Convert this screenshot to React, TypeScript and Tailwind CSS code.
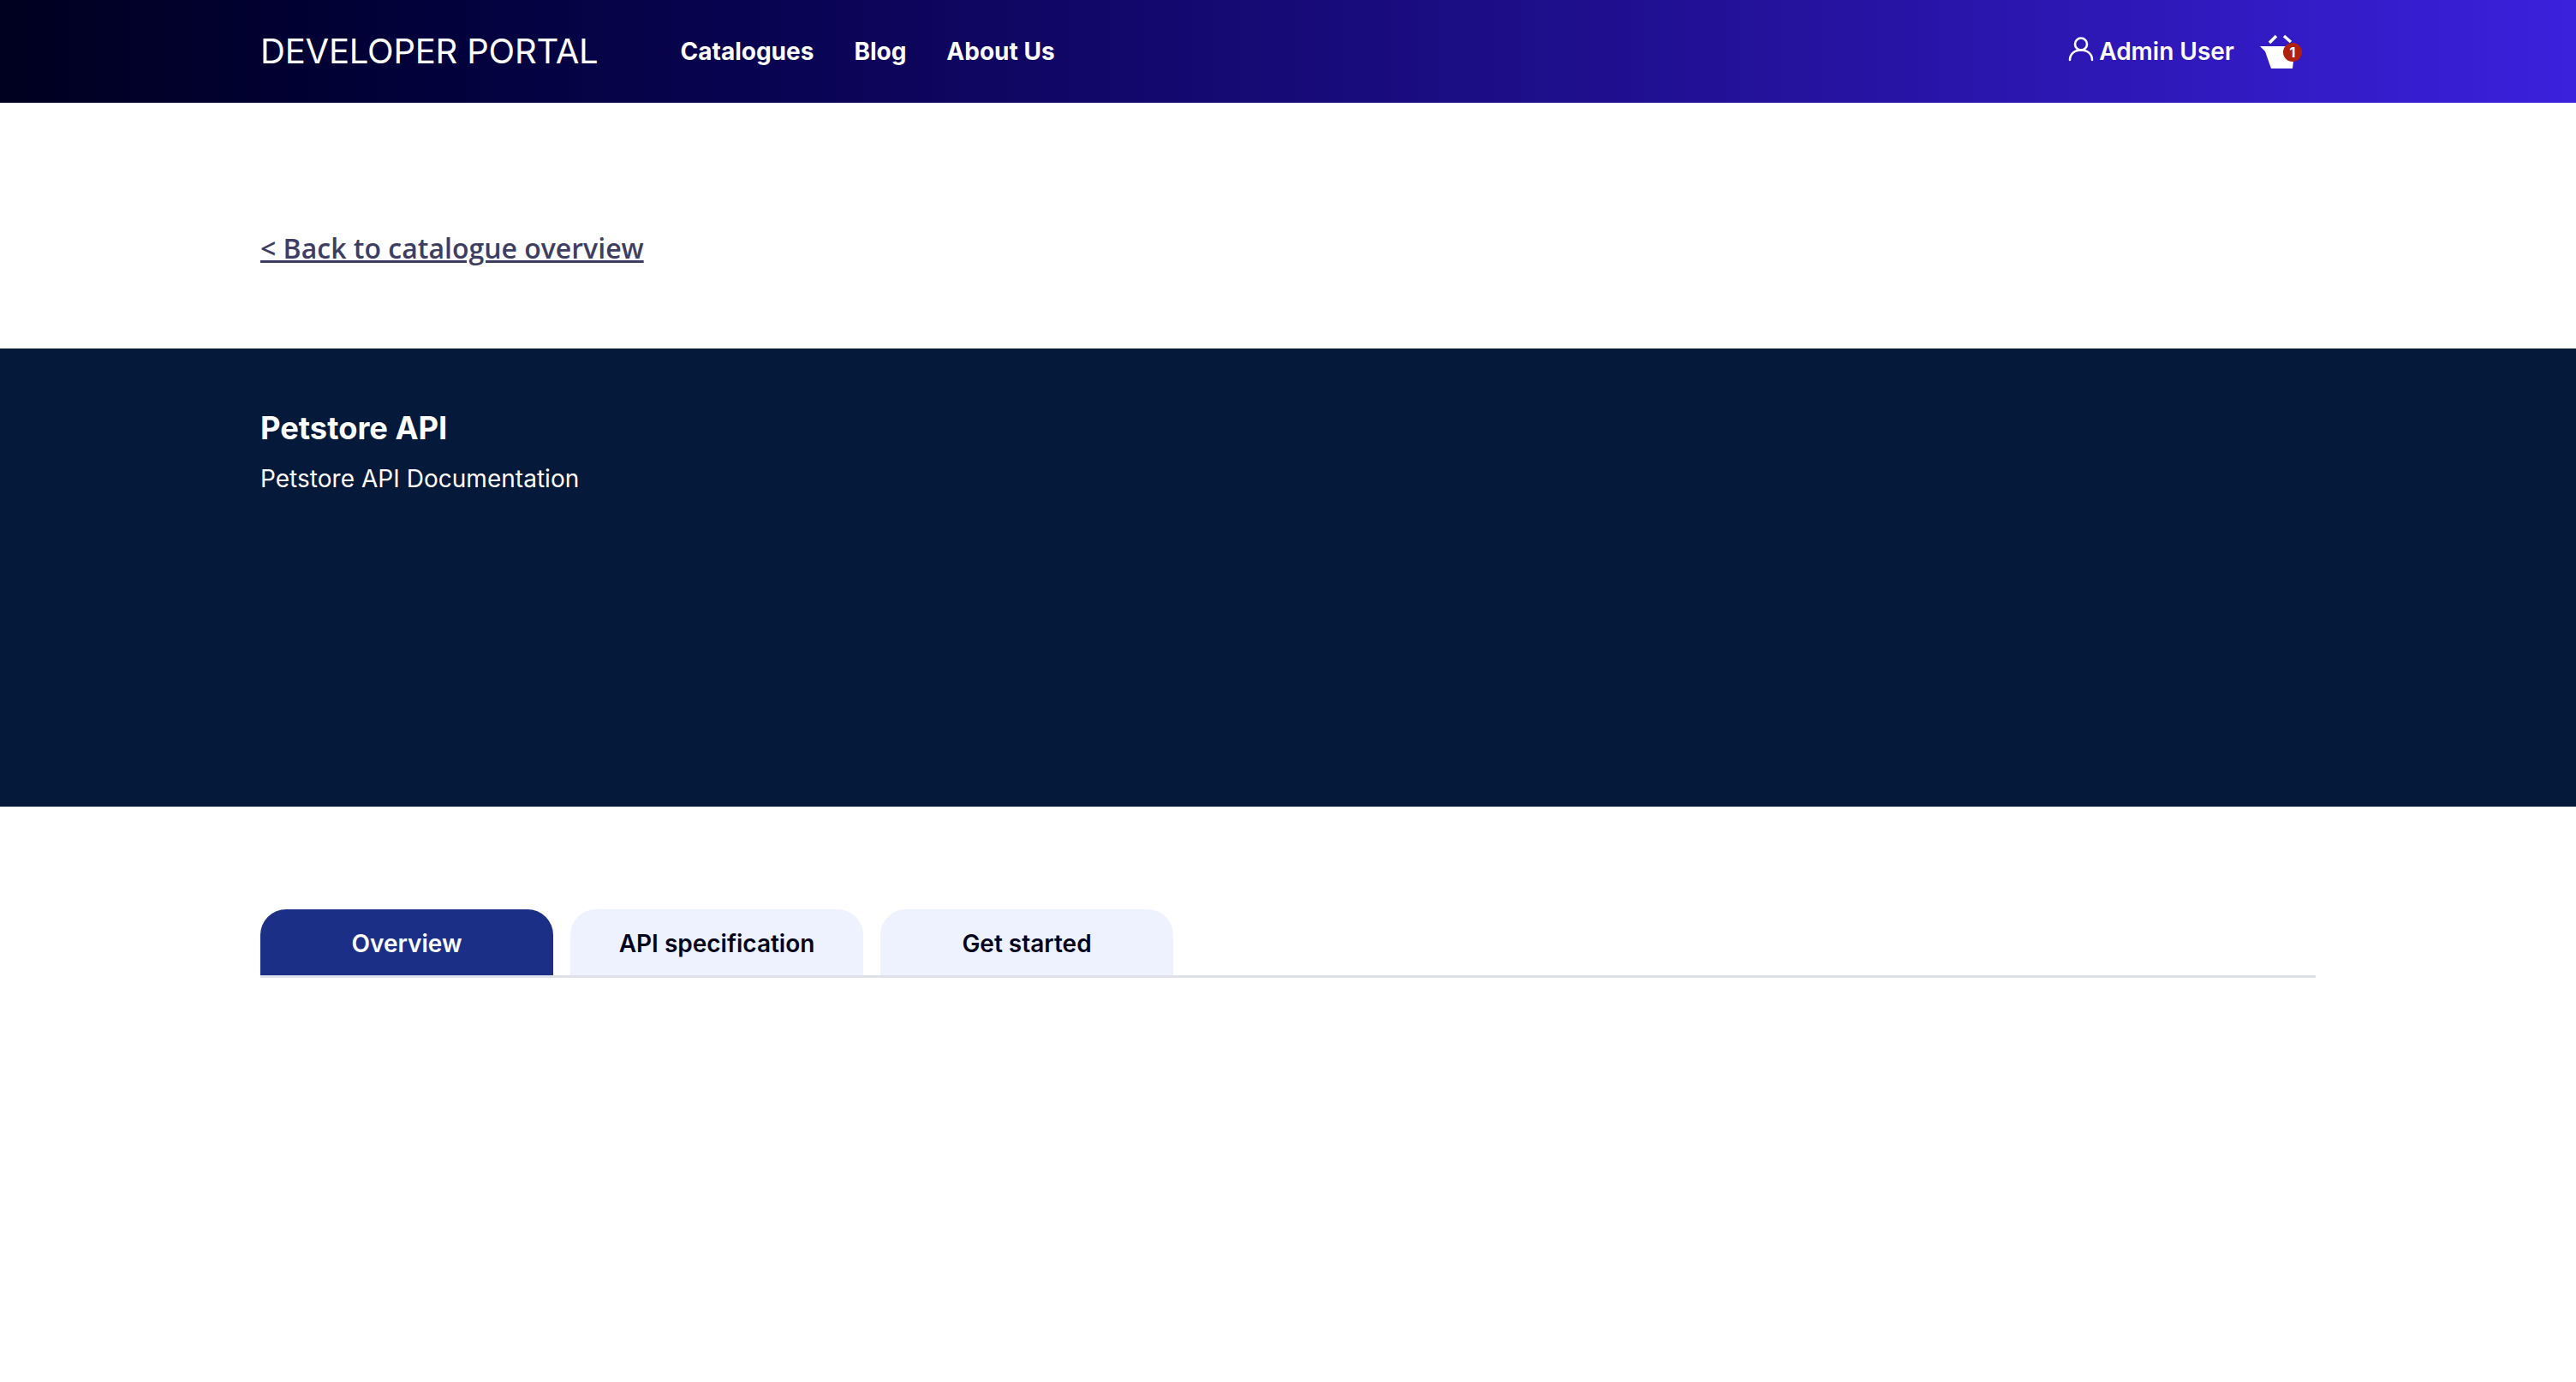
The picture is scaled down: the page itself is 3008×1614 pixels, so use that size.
export default function App() {
  return (
    <div className="min-h-[1614px] bg-white font-['Inter',sans-serif]">
      <header className="flex h-[120px] items-center bg-gradient-to-r from-[#000020] to-[#3b20dc] pl-[304px] pr-[304px] text-white">
        <div className="text-[40px] leading-none font-normal tracking-[-0.2px]">DEVELOPER PORTAL</div>
        <nav className="ml-[96px] flex gap-[47px] text-[28px] font-[650]">
          <a>Catalogues</a>
          <a>Blog</a>
          <a>About Us</a>
        </nav>
        <div className="ml-auto mr-[17px] flex items-center">
          <svg width="30" height="30" viewBox="0 0 30 30" fill="none" stroke="white" strokeWidth="2.6" strokeLinecap="round" className="mb-[6px] mr-[6px]">
            <circle cx="15" cy="9.5" r="7" />
            <path d="M2 28c0-7 5.5-11.5 13-11.5S28 21 28 28" />
          </svg>
          <span className="text-[28px] font-[620]">Admin User</span>
          <div className="relative ml-[30px] mt-[2px] h-[42px] w-[48px]">
            <svg width="48" height="42" viewBox="0 0 48 42" fill="white">
              <path d="M0 14h41l-3 26H13L6 20z" />
              <path d="M11 10l8-8" stroke="white" strokeWidth="3.5" fill="none" />
              <path d="M28 2l8 7" stroke="white" strokeWidth="3.5" fill="none" />
            </svg>
            <span className="absolute left-[27px] top-[10px] flex h-[22px] w-[22px] items-center justify-center rounded-full bg-[#b0200f] text-[16px] font-bold">1</span>
          </div>
        </div>
      </header>
      <div className="px-[304px] pt-[147px] pb-[94px] font-['Open_Sans',sans-serif] text-[32px] font-semibold leading-[46px] text-[#3e3e62]">
        <a className="underline decoration-[3px]">&lt; Back to catalogue overview</a>
      </div>
      <section className="h-[535px] bg-[#05193a] px-[304px] pt-[68px] text-white">
        <h1 className="text-[36.3px] font-[750] leading-[50px]">Petstore API</h1>
        <p className="mt-[14px] text-[28px] leading-[40px] tracking-[0.03px]">Petstore API Documentation</p>
      </section>
      <div className="px-[304px] pt-[120px]">
        <div className="flex gap-[20px] border-b-[3px] border-[#dfe1ea]">
          <div className="flex h-[77px] w-[342px] items-center justify-center rounded-t-[30px] bg-[#1b2f87] pt-[2px] text-[28px] font-[620] text-white">Overview</div>
          <div className="flex h-[77px] w-[342px] items-center justify-center rounded-t-[30px] bg-[#eef2fe] pt-[2px] text-[28px] font-[620] text-[#03031c]">API specification</div>
          <div className="flex h-[77px] w-[342px] items-center justify-center rounded-t-[30px] bg-[#eef2fe] pt-[2px] text-[28px] font-[620] text-[#03031c]">Get started</div>
        </div>
      </div>
    </div>
  );
}
